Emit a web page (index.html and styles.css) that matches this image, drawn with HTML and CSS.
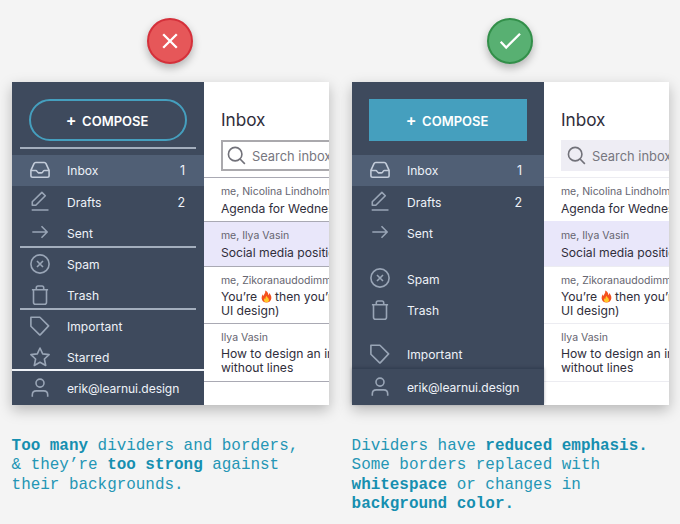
FILE: index.html
```html
<!DOCTYPE html>
<html lang="en">
<head>
<meta charset="utf-8">
<title>Dividers and borders</title>
<link rel="stylesheet" href="styles.css">
</head>
<body>
<svg class="defs" aria-hidden="true">
  <symbol id="i-inbox" viewBox="0 0 20 20"><path d="M.9 10.3 4 3.6Q4.5 2.5 5.700 2.500H14.300Q15.500 2.500 16 3.600L19.100 10.300V15.500Q19.100 17.200 17.400 17.200H2.600Q.9 17.200.9 15.500ZM.9 10.500H5.600Q6.600 10.500 7.100 11.500T8.600 12.900H11.400Q12.400 12.900 12.900 11.700T14.400 10.500H19.100"/></symbol>
  <symbol id="i-edit" viewBox="0 0 20 20"><path d="M1.700 19H18.500M2.300 14.200V10.800L11.900 1.400 15.300 4.800 5.800 14.200Z"/></symbol>
  <symbol id="i-arrow" viewBox="0 0 20 20"><path d="M2.300 10H17M11.500 4.300 17.200 10 11.500 15.700"/></symbol>
  <symbol id="i-spam" viewBox="0 0 20 20"><circle cx="10" cy="10" r="9.100"/><path d="M7 7 13 13M13 7 7 13"/></symbol>
  <symbol id="i-trash" viewBox="0 0 20 20"><path d="M1.900 4.700H18.100M3.500 4.700V17.200Q3.500 19.200 5.500 19.200H14.500Q16.500 19.200 16.500 17.200V4.700M6.300 4.500V2.800Q6.300 1 8 1H12Q13.700 1 13.700 2.800V4.500"/></symbol>
  <symbol id="i-tag" viewBox="0 0 20 20"><path d="M.9 1.200H9.900L18.600 9.900 10.400 18.600Q9.900 19.100 9.400 18.600L.9 10.300Z"/></symbol>
  <symbol id="i-star" viewBox="0 0 20 20"><path d="M10 1 12.700 6.900 19.100 7.600 14.400 12 15.700 18.500 10 15.300 4.300 18.500 5.600 12 .9 7.600 7.300 6.900Z"/></symbol>
  <symbol id="i-user" viewBox="0 0 20 20"><circle cx="10" cy="5.100" r="4"/><path d="M2.300 18.800V16.900Q2.300 12.900 6.300 12.900H13.700Q17.700 12.900 17.700 16.900V18.800"/></symbol>
  <symbol id="i-search" viewBox="0 0 20 20"><circle cx="8.600" cy="8.600" r="7.100"/><path d="M13.700 13.700 18.800 18.800"/></symbol>
  <symbol id="i-fire" viewBox="0 0 12 14"><path fill="#f4511e" d="M4.600.5C7.600 1.600 8 4.200 7.900 5.600 8.700 5 8.800 3.900 8.700 3.200 10.500 4.600 11.500 6.800 11.300 9 11 12 8.800 13.600 6 13.600S.8 11.800.7 8.900C.6 6.900 1.500 5.400 2.100 4.600 2.200 5.500 2.500 6.200 3 6.500 3 4.500 5.300 3.200 4.600.5Z"/><path fill="#ffc928" d="M6.100 6.300C6.200 8.300 8.800 8.700 8.700 11 8.600 12.500 7.400 13.400 6 13.400S3.200 12.500 3.200 10.900C3.200 9.900 3.700 9.300 4.100 8.900 4.300 9.500 4.500 9.700 4.900 9.900 4.800 8.600 5.100 7.200 6.100 6.300Z"/></symbol>
</svg>

<main class="compare">
  <section class="example strong">
    <div class="badge bad"><svg viewBox="0 0 46 46"><path d="M16.200 16.200 29.800 29.800M29.800 16.200 16.200 29.800"/></svg></div>
    <div class="card">
      <nav class="sidebar">
        <div class="compose"><span class="plus">+</span> COMPOSE</div>
        <div class="divider top"></div>
        <div class="item active"><svg><use href="#i-inbox"/></svg><span>Inbox</span><b>1</b></div>
        <div class="item"><svg><use href="#i-edit"/></svg><span>Drafts</span><b>2</b></div>
        <div class="item"><svg><use href="#i-arrow"/></svg><span>Sent</span></div>
        <div class="divider"></div>
        <div class="item"><svg><use href="#i-spam"/></svg><span>Spam</span></div>
        <div class="item"><svg><use href="#i-trash"/></svg><span>Trash</span></div>
        <div class="divider"></div>
        <div class="item"><svg><use href="#i-tag"/></svg><span>Important</span></div>
        <div class="item"><svg><use href="#i-star"/></svg><span>Starred</span></div>
        <div class="account"><svg><use href="#i-user"/></svg><span>erik@learnui.design</span></div>
      </nav>
      <div class="mail">
        <h2>Inbox</h2>
        <div class="search"><svg><use href="#i-search"/></svg><span>Search inbox</span></div>
        <article class="row"><p class="from">me, Nicolina Lindholm</p><p class="subject">Agenda for Wednesday</p></article>
        <article class="row selected"><p class="from">me, Ilya Vasin</p><p class="subject">Social media positioning</p></article>
        <article class="row tall"><p class="from">me, Zikoranaudodimma</p><p class="subject">You’re <svg class="fire"><use href="#i-fire"/></svg> then you’re<br>UI design)</p></article>
        <article class="row tall last"><p class="from">Ilya Vasin</p><p class="subject">How to design an inbox<br>without lines</p></article>
      </div>
    </div>
    <p class="caption"><strong>Too many</strong> dividers and borders,<br>&amp; they’re <strong>too strong</strong> against<br>their backgrounds.</p>
  </section>

  <section class="example subtle">
    <div class="badge good"><svg viewBox="0 0 46 46"><path d="M13.700 23.800 19.200 29.500 33 15.800"/></svg></div>
    <div class="card">
      <nav class="sidebar">
        <div class="compose"><span class="plus">+</span> COMPOSE</div>
        <div class="item active"><svg><use href="#i-inbox"/></svg><span>Inbox</span><b>1</b></div>
        <div class="item"><svg><use href="#i-edit"/></svg><span>Drafts</span><b>2</b></div>
        <div class="item"><svg><use href="#i-arrow"/></svg><span>Sent</span></div>
        <div class="item group"><svg><use href="#i-spam"/></svg><span>Spam</span></div>
        <div class="item"><svg><use href="#i-trash"/></svg><span>Trash</span></div>
        <div class="item group"><svg><use href="#i-tag"/></svg><span>Important</span></div>
        <div class="account"><svg><use href="#i-user"/></svg><span>erik@learnui.design</span></div>
      </nav>
      <div class="mail">
        <h2>Inbox</h2>
        <div class="search"><svg><use href="#i-search"/></svg><span>Search inbox</span></div>
        <article class="row"><p class="from">me, Nicolina Lindholm</p><p class="subject">Agenda for Wednesday</p></article>
        <article class="row selected"><p class="from">me, Ilya Vasin</p><p class="subject">Social media positioning</p></article>
        <article class="row tall"><p class="from">me, Zikoranaudodimma</p><p class="subject">You’re <svg class="fire"><use href="#i-fire"/></svg> then you’re<br>UI design)</p></article>
        <article class="row tall last"><p class="from">Ilya Vasin</p><p class="subject">How to design an inbox<br>without lines</p></article>
      </div>
    </div>
    <p class="caption">Dividers have <strong>reduced emphasis.</strong><br>Some borders replaced with<br><strong>whitespace</strong> or changes in<br><strong>background color.</strong></p>
  </section>
</main>
</body>
</html>
```
FILE: styles.css
```css
* { box-sizing: border-box; }
body {
  margin: 0;
  height: 524px;
  overflow: hidden;
  background: #f4f4f4;
  font-family: Inter, "Liberation Sans", sans-serif;
}
h2, p { margin: 0; font-weight: 400; }
.defs { display: none; }

.compare {
  display: grid;
  grid-template-columns: 317.300px 317.300px;
  column-gap: 22.700px;
  padding: 18px 0 0 11.600px;
}
.example { min-width: 0; }

.badge {
  width: 46px;
  height: 46px;
  margin: 0 0 18px 135.600px;
  border-radius: 50%;
  box-shadow: 0 4px 9px rgba(0, 0, 0, .28);
}
.badge svg {
  display: block;
  width: 46px;
  height: 46px;
  margin: -2px;
  fill: none;
  stroke: #fff;
  stroke-width: 2.300;
}
.bad { background: #e65759; border: 2px solid #d5303a; }
.good { background: #58b072; border: 2px solid #328f49; }

.card {
  display: grid;
  grid-template-columns: 192px 1fr;
  height: 323px;
  overflow: hidden;
  background: #fff;
  box-shadow: 0 5px 13px rgba(0, 0, 0, .25);
}

.sidebar {
  display: flex;
  flex-direction: column;
  min-height: 0;
  height: 323px;
  padding-top: 17px;
  background: #3e4a5d;
  color: #eef2f8;
  font-size: 12.100px;
}
.sidebar svg {
  flex: none;
  width: 20px;
  height: 20px;
  fill: none;
  stroke: #99a5b6;
  stroke-width: 1.600;
  stroke-linejoin: round;
}
.compose {
  display: flex;
  flex: none;
  align-items: center;
  justify-content: center;
  gap: 5.500px;
  width: 158px;
  height: 42px;
  margin: 0 0 13.500px 17px;
  padding: 1px 1px 0 0;
  color: #fff;
  font-size: 13px;
  font-weight: 600;
}
.plus { font-size: 16px; margin-top: -2px; }
.strong .compose { border: 2px solid #459fbe; border-radius: 21px; }
.subtle .compose { background: #459fbe; }

.divider {
  flex: none;
  height: 2px;
  margin: -2px 8px 0;
  background: #a3aebd;
}
.divider.top { margin: -8px 8px 6px; }
.item {
  display: flex;
  flex: none;
  align-items: center;
  height: 31.200px;
  padding: 0 18.500px 0 18px;
}
.subtle .item { padding-right: 21.500px; }
.item span, .account span {
  margin-left: 17.300px;
  padding-top: 1.500px;
  white-space: nowrap;
}
.item span { letter-spacing: .05px; }
.account span { letter-spacing: -.07px; padding-top: 1px; }
.item b { margin-left: auto; padding-top: 1.500px; font-size: 12.500px; font-weight: 400; }
.item.active { background: #505f75; }
.item.active svg { stroke: #c3ccda; }
.item.group { margin-top: 14.700px; }
.item.group ~ .group { margin-top: 13.500px; }
.account {
  display: flex;
  flex: none;
  align-items: center;
  position: absolute;
  top: 369px;
  width: 192px;
  height: 36px;
  padding-left: 18px;
  background: #3e4a5d;
}
.strong .account { border-top: 2px solid #eef2f7; }
.subtle .account { box-shadow: 0 -1px 3px rgba(20, 28, 45, .35); }

.mail { min-width: 0; padding-top: 26px; overflow: hidden; color: #302e3b; }
.mail h2 { padding-left: 17.300px; font-size: 17.200px; line-height: 23px; }
.search {
  display: flex;
  align-items: center;
  width: 140px;
  height: 31px;
  margin: 9px 0 6px 17.300px;
  padding-left: 6px;
  color: #77777f;
  font-size: 12.900px;
  white-space: nowrap;
}
.search svg { width: 19px; height: 19px; margin-right: 6px; fill: none; stroke: #717179; stroke-width: 1.700; }
.search span { padding-top: 1px; }
.strong .search { border: 2px solid #aaa9ad; padding-left: 4px; }
.subtle .search { background: #eeedf4; }
.row {
  height: 44px;
  padding: 7px 0 0 17.300px;
  border-top: 1px solid #a9a9b3;
  white-space: nowrap;
}
.row.selected { height: 45px; background: #e9e7fa; }
.row.tall { height: 57px; padding-top: 6.500px; }
.row.tall .subject { margin-top: 2.300px; }
.row.last { height: 59px; border-bottom: 1px solid #a9a9b3; }
.subtle .row { border-color: #ececf1; }
.subtle .row.selected { border-color: #e9e7fa; }
.from { color: #65646f; font-size: 10.500px; line-height: 14px; }
.subject { margin-top: 3px; font-size: 12.150px; line-height: 13.700px; }
.fire { width: 11px; height: 13px; margin: -3px 0 0; vertical-align: -2px; }

.caption {
  margin-top: 32px;
  color: #2496b5;
  font-family: "Liberation Mono", monospace;
  font-size: 15.930px;
  line-height: 19.350px;
  white-space: nowrap;
}
.caption strong { color: #168fb0; }
```
